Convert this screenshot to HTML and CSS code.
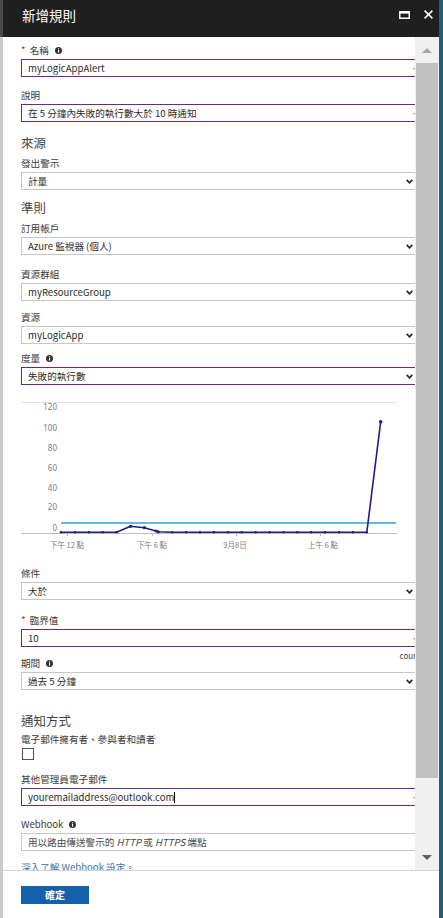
FILE: index.html
```html
<!DOCTYPE html>
<html lang="zh-Hant">
<head>
<meta charset="utf-8">
<title>新增規則</title>
<link rel="stylesheet" href="styles.css">
</head>
<body>
<div class="blade">
  <div class="main">
    <header class="hdr">
      <h1 class="title">新增規則</h1>
      <div class="hdr-icons">
        <svg class="ic-max" width="11" height="8" viewBox="0 0 11 8"><rect class="ic-stroke" x="0.75" y="0.75" width="9.5" height="6.5"/><rect class="ic-fill" x="0" y="0" width="11" height="2.6"/></svg>
        <svg class="ic-close" width="9" height="9" viewBox="0 0 9 9"><path class="ic-stroke" d="M0.6 0.6 L8.4 8.4 M8.4 0.6 L0.6 8.4"/></svg>
      </div>
    </header>
    <div class="body">
      <div class="content">
        <div class="field f-name">
          <div class="lbl"><span class="req">*</span>名稱<svg class="info" width="7" height="7" viewBox="0 0 7 7"><circle cx="3.5" cy="3.5" r="3.5"/><rect x="3" y="3" width="1.1" height="2.6"/><rect x="3" y="1.3" width="1.1" height="1.1"/></svg></div>
          <div class="inp purple">myLogicAppAlert<svg class="ok-mark" width="8" height="6" viewBox="0 0 8 6"><path d="M0.5 3 L3 5.3 L7.5 0.7"/></svg></div>
        </div>
        <div class="field f-desc">
          <div class="lbl">說明</div>
          <div class="inp purple">在 5 分鐘內失敗的執行數大於 10 時通知<svg class="ok-mark" width="8" height="6" viewBox="0 0 8 6"><path d="M0.5 3 L3 5.3 L7.5 0.7"/></svg></div>
        </div>

        <h2 class="sec sec-src">來源</h2>
        <div class="field f-after-sec">
          <div class="lbl">發出警示</div>
          <div class="inp sel">計量<svg class="chev" width="7" height="5" viewBox="0 0 7 5"><path d="M0.7 0.8 L3.5 3.8 L6.3 0.8"/></svg></div>
        </div>

        <h2 class="sec sec-crit">準則</h2>
        <div class="field f-after-sec">
          <div class="lbl">訂用帳戶</div>
          <div class="inp sel">Azure 監視器 (個人)<svg class="chev" width="7" height="5" viewBox="0 0 7 5"><path d="M0.7 0.8 L3.5 3.8 L6.3 0.8"/></svg></div>
        </div>
        <div class="field f-rg">
          <div class="lbl">資源群組</div>
          <div class="inp sel">myResourceGroup<svg class="chev" width="7" height="5" viewBox="0 0 7 5"><path d="M0.7 0.8 L3.5 3.8 L6.3 0.8"/></svg></div>
        </div>
        <div class="field f-res">
          <div class="lbl">資源</div>
          <div class="inp sel">myLogicApp<svg class="chev" width="7" height="5" viewBox="0 0 7 5"><path d="M0.7 0.8 L3.5 3.8 L6.3 0.8"/></svg></div>
        </div>
        <div class="field f-metric">
          <div class="lbl">度量<svg class="info" width="7" height="7" viewBox="0 0 7 7"><circle cx="3.5" cy="3.5" r="3.5"/><rect x="3" y="3" width="1.1" height="2.6"/><rect x="3" y="1.3" width="1.1" height="1.1"/></svg></div>
          <div class="inp sel purple">失敗的執行數<svg class="chev" width="7" height="5" viewBox="0 0 7 5"><path d="M0.7 0.8 L3.5 3.8 L6.3 0.8"/></svg></div>
        </div>

        <svg class="chart" width="380" height="160" viewBox="0 0 380 160">
          <line class="grid" x1="0" y1="5.5" x2="376" y2="5.5"/>
          <text class="ylab" x="36" y="12.8">120</text>
          <text class="ylab" x="36" y="33.8">100</text>
          <text class="ylab" x="36" y="53.8">80</text>
          <text class="ylab" x="36" y="73.8">60</text>
          <text class="ylab" x="36" y="93.8">40</text>
          <text class="ylab" x="36" y="112.8">20</text>
          <text class="ylab" x="36" y="133.8">0</text>
          <line class="axis" x1="0" y1="136.5" x2="376" y2="136.5"/>
          <line class="axis" x1="46.5" y1="136" x2="46.5" y2="139"/>
          <line class="axis" x1="131.5" y1="136" x2="131.5" y2="139"/>
          <line class="axis" x1="215.5" y1="136" x2="215.5" y2="139"/>
          <line class="axis" x1="299.5" y1="136" x2="299.5" y2="139"/>
          <line class="thresh" x1="40" y1="126" x2="375" y2="126"/>
          <polyline class="series" points="40,135.3 53.9,135.3 67.8,135.3 81.7,135.3 95.6,135.3 109.5,129.3 123.4,130.7 135,134 137.3,134.8 151.2,135.3 165.1,135.3 179,135.3 192.9,135.3 206.8,135.3 220.7,135.3 234.6,135.3 248.5,135.3 262.4,135.3 276.3,135.3 290.2,135.3 304.1,135.3 318,135.3 331.9,135.3 345.8,135.3 359.7,24.7"/>
          <g class="dots">
            <circle cx="40" cy="135.3" r="1.2"/><circle cx="53.9" cy="135.3" r="1.2"/><circle cx="67.8" cy="135.3" r="1.2"/><circle cx="81.7" cy="135.3" r="1.2"/><circle cx="95.6" cy="135.3" r="1.2"/><circle cx="109.5" cy="129.3" r="1.6"/><circle cx="123.4" cy="130.7" r="1.6"/><circle cx="135" cy="134" r="1.6"/><circle cx="137.3" cy="134.8" r="1.6"/><circle cx="151.2" cy="135.3" r="1.2"/><circle cx="165.1" cy="135.3" r="1.2"/><circle cx="179" cy="135.3" r="1.2"/><circle cx="192.9" cy="135.3" r="1.2"/><circle cx="206.8" cy="135.3" r="1.2"/><circle cx="220.7" cy="135.3" r="1.2"/><circle cx="234.6" cy="135.3" r="1.2"/><circle cx="248.5" cy="135.3" r="1.2"/><circle cx="262.4" cy="135.3" r="1.2"/><circle cx="276.3" cy="135.3" r="1.2"/><circle cx="290.2" cy="135.3" r="1.2"/><circle cx="304.1" cy="135.3" r="1.2"/><circle cx="318" cy="135.3" r="1.2"/><circle cx="331.9" cy="135.3" r="1.2"/><circle cx="345.8" cy="135.3" r="1.2"/><circle cx="359.7" cy="24.7" r="1.8"/>
          </g>
          <text class="xlab" x="46" y="150.7">下午 12 點</text>
          <text class="xlab" x="131" y="150.7">下午 6 點</text>
          <text class="xlab" x="214" y="150.7">9月8日</text>
          <text class="xlab" x="302" y="150.7">上午 6 點</text>
        </svg>

        <div class="field f-cond">
          <div class="lbl">條件</div>
          <div class="inp sel">大於<svg class="chev" width="7" height="5" viewBox="0 0 7 5"><path d="M0.7 0.8 L3.5 3.8 L6.3 0.8"/></svg></div>
        </div>
        <div class="field f-thr">
          <div class="lbl"><span class="req">*</span>臨界值</div>
          <div class="inp purple">10<svg class="ok-mark" width="8" height="6" viewBox="0 0 8 6"><path d="M0.5 3 L3 5.3 L7.5 0.7"/></svg></div>
          <div class="unit">count</div>
        </div>
        <div class="field f-period">
          <div class="lbl">期間<svg class="info" width="7" height="7" viewBox="0 0 7 7"><circle cx="3.5" cy="3.5" r="3.5"/><rect x="3" y="3" width="1.1" height="2.6"/><rect x="3" y="1.3" width="1.1" height="1.1"/></svg></div>
          <div class="inp sel">過去 5 分鐘<svg class="chev" width="7" height="5" viewBox="0 0 7 5"><path d="M0.7 0.8 L3.5 3.8 L6.3 0.8"/></svg></div>
        </div>

        <h2 class="sec sec-notify">通知方式</h2>
        <div class="field f-owners">
          <div class="lbl">電子郵件擁有者、參與者和讀者</div>
          <div class="chk"></div>
        </div>
        <div class="field f-email">
          <div class="lbl">其他管理員電子郵件</div>
          <div class="inp purple">youremailaddress@outlook.com<span class="caret"></span><svg class="ok-mark" width="8" height="6" viewBox="0 0 8 6"><path d="M0.5 3 L3 5.3 L7.5 0.7"/></svg></div>
        </div>
        <div class="field f-hook">
          <div class="lbl">Webhook<svg class="info" width="7" height="7" viewBox="0 0 7 7"><circle cx="3.5" cy="3.5" r="3.5"/><rect x="3" y="3" width="1.1" height="2.6"/><rect x="3" y="1.3" width="1.1" height="1.1"/></svg></div>
          <div class="inp ph">用以路由傳送警示的 <i>HTTP</i> 或 <i>HTTPS</i> 端點</div>
        </div>
        <a class="more" href="#">深入了解 Webhook 設定。</a>
      </div>
      <div class="scrollbar">
        <div class="sb-btn"><span class="tri-up"></span></div>
        <div class="sb-thumb"></div>
        <div class="sb-track"></div>
        <div class="sb-btn"><span class="tri-down"></span></div>
      </div>
    </div>
    <footer class="ftr">
      <button class="ok" type="button">確定</button>
    </footer>
  </div>
  <div class="edge"></div>
</div>
</body>
</html>
```

FILE: styles.css
```css
* { box-sizing: border-box; }
html, body { margin: 0; padding: 0; }
body {
  font-family: "Noto Sans CJK TC", "Noto Sans", sans-serif;
  background: #fff;
  color: #333;
}
.blade {
  display: flex;
  width: 443px;
  height: 918px;
}
.main {
  width: 439px;
  display: flex;
  flex-direction: column;
}
.edge {
  width: 4px;
  background: #285b79;
}

/* header */
.hdr {
  height: 37px;
  background: #1f1f1f;
  border-left: 3px solid #4a4a4a;
  display: flex;
  justify-content: space-between;
  align-items: flex-start;
}
.title {
  margin: 0;
  padding: 6px 0 0 19px;
  font-size: 13.5px;
  line-height: 18px;
  font-weight: 400;
  color: #fff;
}
.hdr-icons {
  display: flex;
  align-items: flex-start;
  gap: 14px;
  padding: 10px 6px 0 0;
}
.ic-max { margin-top: 1px; }
.ic-stroke { fill: none; stroke: #fff; stroke-width: 1.5; }
.ic-fill { fill: #fff; }

/* body */
.body {
  height: 833px;
  display: flex;
}
.content {
  flex: 1;
  min-width: 0;
  overflow: hidden;
  border-left: 3px solid #cbcbcb;
  padding: 6px 0 0 18px;
}
.field { display: block; }
.lbl {
  display: flex;
  align-items: center;
  height: 14px;
  line-height: 14px;
  margin-bottom: 2px;
  font-size: 9.6px;
  color: #3a3a3a;
  white-space: nowrap;
}
.req {
  color: #c4262e;
  margin-right: 4px;
  font-size: 10px;
}
.info {
  margin-left: 6px;
  fill: #333;
}
.info rect { fill: #fff; }
.inp {
  position: relative;
  width: 400px;
  height: 18px;
  border: 1px solid #c6c6c6;
  padding-left: 6px;
  font-size: 9.6px;
  line-height: 16px;
  color: #2b2b2b;
  white-space: nowrap;
  background: #fff;
}
.inp.purple { border-color: #6a2a83; }
.inp.ph { color: #4a4a4a; }
.chev {
  position: absolute;
  right: 7px;
  top: 6px;
}
.chev path { fill: none; stroke: #2a2a2a; stroke-width: 1.7; }
.ok-mark {
  position: absolute;
  right: -1px;
  top: 5px;
}
.ok-mark path { fill: none; stroke: #8cc274; stroke-width: 1.2; }
.caret {
  display: inline-block;
  width: 1px;
  height: 11px;
  background: #000;
  vertical-align: -2px;
}

.sec {
  margin: 0;
  font-size: 12.5px;
  line-height: 16px;
  font-weight: 400;
  color: #444;
}

/* vertical rhythm */
.f-desc { margin-top: 11px; }
.sec-src { margin-top: 13px; }
.f-after-sec { margin-top: 5px; }
.sec-crit { margin-top: 10px; }
.f-rg { margin-top: 12px; }
.f-res { margin-top: 9px; }
.f-metric { margin-top: 7px; }
.chart {
  display: block;
  margin-top: 12px;
  margin-left: 0;
}
.f-cond { margin-top: 9px; }
.f-thr { margin-top: 13px; }
.unit {
  width: 400px;
  height: 9px;
  text-align: right;
  font-size: 8px;
  line-height: 8px;
  padding-top: 5px;
  color: #444;
  overflow: visible;
}
.f-period { margin-top: 0; }
.sec-notify { margin-top: 23px; }
.f-owners { margin-top: 3px; }
.chk {
  width: 12px;
  height: 12px;
  border: 1px solid #555;
  margin-left: 1px;
  background: #fff;
}
.f-email { margin-top: 12px; }
.f-hook { margin-top: 11px; }
.more {
  display: block;
  margin-top: 9px;
  font-size: 9.6px;
  line-height: 14px;
  color: #3a72b0;
  text-decoration: none;
  white-space: nowrap;
}

/* chart */
.grid { stroke: #e4e4e4; stroke-width: 1; }
.axis { stroke: #bdbdbd; stroke-width: 1; }
.thresh { stroke: #27a7dc; stroke-width: 1.6; }
.series { fill: none; stroke: #221c86; stroke-width: 1.6; stroke-linejoin: round; }
.dots circle { fill: #221c86; }
.ylab {
  font-family: "Noto Sans", "Noto Sans CJK TC", sans-serif;
  font-size: 8px;
  fill: #7a7a7a;
  text-anchor: end;
}
.xlab {
  font-family: "Noto Sans CJK TC", sans-serif;
  font-size: 7.5px;
  fill: #7a7a7a;
  text-anchor: middle;
}

/* scrollbar */
.scrollbar {
  width: 24px;
  background: #f0f0f0;
  display: flex;
  flex-direction: column;
}
.sb-btn {
  height: 26px;
  display: flex;
  align-items: center;
  justify-content: center;
}
.tri-up {
  width: 0;
  height: 0;
  border-left: 5px solid transparent;
  border-right: 5px solid transparent;
  border-bottom: 5px solid #a6a6a6;
}
.tri-down {
  width: 0;
  height: 0;
  border-left: 5px solid transparent;
  border-right: 5px solid transparent;
  border-top: 5px solid #606060;
}
.sb-thumb {
  height: 715px;
  margin: 0 1px;
  background: #c1c1c1;
}
.sb-track { flex: 1; }

/* footer */
.ftr {
  height: 48px;
  border-top: 1px solid #d4d4d4;
  border-left: 3px solid #cbcbcb;
  padding: 15px 0 0 18px;
  background: #fff;
}
.ok {
  display: block;
  width: 68px;
  height: 18px;
  border: 0;
  margin: 0;
  padding: 0;
  background: #1560ab;
  color: #fff;
  font-family: "Noto Sans CJK TC", sans-serif;
  font-size: 10px;
  font-weight: 700;
  line-height: 18px;
  text-align: center;
}
```
